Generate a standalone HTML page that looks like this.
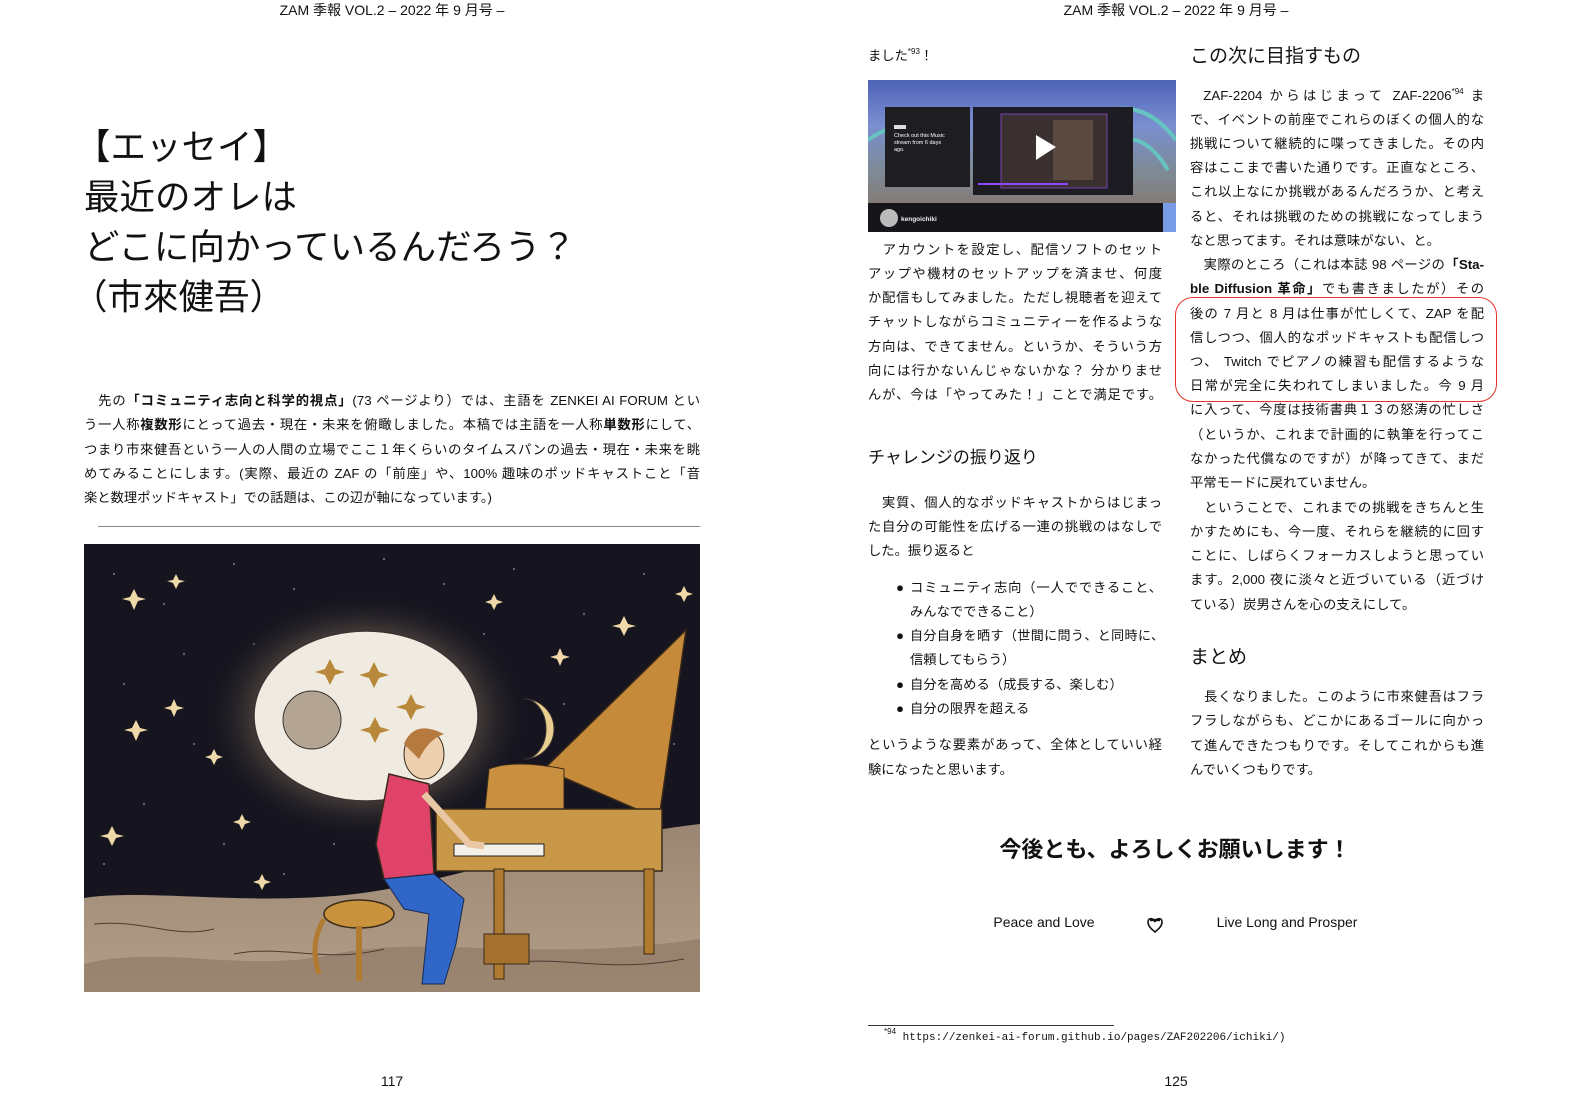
<!DOCTYPE html>
<html><head><meta charset="utf-8">
<style>
html,body{margin:0;padding:0;background:#fff;}
body{width:1584px;height:1118px;position:relative;overflow:hidden;font-family:"Liberation Sans","Noto Sans CJK JP",sans-serif;color:#111;}
.t{position:absolute;font-size:13.3px;line-height:20px;white-space:nowrap;}
.j{text-align:justify;text-align-last:justify;white-space:normal;height:20px;overflow:visible;}
.c{position:absolute;font-size:14px;line-height:20px;white-space:nowrap;transform:translateX(-50%);}
.h{position:absolute;white-space:nowrap;}
b{font-weight:bold;}
sup{font-size:8px;vertical-align:6px;line-height:0;}
</style></head><body>

<div class="c" style="left:392px;top:0px;">ZAM 季報 VOL.2 – 2022 年 9 月号 –</div>
<div class="c" style="left:1176px;top:0px;">ZAM 季報 VOL.2 – 2022 年 9 月号 –</div>

<div class="h" style="left:84px;top:122px;font-size:35.5px;line-height:50px;"><span style="margin-left:-9px">【エッセイ】</span><br>最近のオレは<br>どこに向かっているんだろう？<br><span style="margin-left:-12px">（市來健吾）</span></div>

<div class="t j" style="left:84px;width:616px;top:391px;">&emsp;先の<b>「コミュニティ志向と科学的視点」</b>(73 ページより）では、主語を ZENKEI AI FORUM とい</div>
<div class="t j" style="left:84px;width:616px;top:415px;">う一人称<b>複数形</b>にとって過去・現在・未来を俯瞰しました。本稿では主語を一人称<b>単数形</b>にして、</div>
<div class="t j" style="left:84px;width:616px;top:440px;">つまり市來健吾という一人の人間の立場でここ１年くらいのタイムスパンの過去・現在・未来を眺</div>
<div class="t j" style="left:84px;width:616px;top:464px;">めてみることにします。(実際、最近の ZAF の「前座」や、100% 趣味のポッドキャストこと「音</div>
<div class="t" style="left:84px;top:488px;">楽と数理ポッドキャスト」での話題は、この辺が軸になっています。)</div>
<div style="position:absolute;left:98px;top:526px;width:602px;height:1px;background:#888;"></div>

<svg style="position:absolute;left:84px;top:544px;" width="616" height="448" viewBox="0 0 616 448">
<defs>
<radialGradient id="glow" cx="0.5" cy="0.5" r="0.5"><stop offset="0.6" stop-color="#5a4e44"/><stop offset="1" stop-color="#14131d" stop-opacity="0"/></radialGradient>
<linearGradient id="gr" x1="0" y1="0" x2="0" y2="1"><stop offset="0" stop-color="#9b8673"/><stop offset="1" stop-color="#b39f88"/></linearGradient>
</defs>
<rect width="616" height="448" fill="#15141f"/>
<g fill="#d8d6e0" opacity="0.55">
<circle cx="30" cy="30" r="1"/><circle cx="80" cy="60" r="1"/><circle cx="150" cy="20" r="1"/><circle cx="210" cy="45" r="1"/><circle cx="300" cy="15" r="1"/><circle cx="360" cy="40" r="1"/><circle cx="430" cy="25" r="1"/><circle cx="500" cy="70" r="1"/><circle cx="560" cy="30" r="1"/><circle cx="40" cy="140" r="1"/><circle cx="110" cy="200" r="1"/><circle cx="60" cy="260" r="1"/><circle cx="140" cy="300" r="1"/><circle cx="200" cy="330" r="1"/><circle cx="250" cy="300" r="1"/><circle cx="20" cy="320" r="1"/><circle cx="480" cy="160" r="1"/><circle cx="590" cy="200" r="1"/><circle cx="540" cy="250" r="1"/><circle cx="170" cy="100" r="1"/><circle cx="100" cy="110" r="1"/><circle cx="400" cy="90" r="1"/>
</g>
<ellipse cx="282" cy="172" rx="165" ry="125" fill="url(#glow)"/>
<ellipse cx="282" cy="172" rx="112" ry="85" fill="#f0ebe0" stroke="#3a3230" stroke-width="1.5"/>
<circle cx="228" cy="176" r="29" fill="#b3a592" stroke="#3a3230"/>
<g fill="#b8893a"><polygon points="246,115 251,125 261,128 251,131 246,141 241,131 231,128 241,125"/><polygon points="290,118 295,128 305,131 295,134 290,144 285,134 275,131 285,128"/><polygon points="327,150 332,160 342,163 332,166 327,176 322,166 312,163 322,160"/><polygon points="291,173 296,183 306,186 296,189 291,199 286,189 276,186 286,183"/></g>
<g fill="#f0d9a8"><polygon points="50,45 54,53 62,55 54,57 50,66 46,57 38,55 46,53"/><polygon points="92,30 95,36 101,37 95,39 92,45 89,39 83,37 89,36"/><polygon points="90,155 93,162 100,164 93,166 90,173 87,166 80,164 87,162"/><polygon points="52,176 56,184 64,186 56,188 52,197 48,188 40,186 48,184"/><polygon points="130,205 133,211 139,213 133,215 130,221 127,215 121,213 127,211"/><polygon points="28,282 32,290 40,292 32,294 28,302 24,294 16,292 24,290"/><polygon points="158,270 161,276 167,278 161,280 158,286 155,280 149,278 155,276"/><polygon points="178,330 181,336 187,338 181,340 178,346 175,340 169,338 175,336"/><polygon points="540,72 544,80 552,82 544,84 540,92 536,84 528,82 536,80"/><polygon points="476,104 479,111 486,113 479,115 476,122 473,115 466,113 473,111"/><polygon points="600,42 603,48 609,50 603,52 600,58 597,52 591,50 597,48"/><polygon points="410,50 413,56 419,58 413,60 410,66 407,60 401,58 407,56"/></g>
<path d="M440,155 a28,28 0 0 1 0,60 a22,30 0 0 0 0,-60z" fill="#e8cf90" stroke="#3a3230"/>
<path d="M0,354 C60,345 150,360 250,352 C350,345 450,300 616,280 L616,448 L0,448z" fill="url(#gr)"/>
<path d="M0,420 C80,400 160,430 250,410 C350,390 450,420 616,395 L616,448 L0,448z" fill="#8a7563" opacity="0.6"/>
<path d="M10,380 C60,375 90,395 130,385 M150,410 C200,400 240,420 300,405 M420,420 C480,410 520,430 600,415" stroke="#4a3c32" fill="none"/>
<path d="M460,225 L602,86 L575,275z" fill="#c58a3a" stroke="#3a2a18" stroke-width="1.5"/>
<path d="M405,225 Q430,215 480,225 L480,270 L400,275z" fill="#c89040" stroke="#3a2a18"/>
<rect x="352" y="265" width="226" height="62" fill="#c89848" stroke="#3a2a18" stroke-width="1.5"/>
<rect x="370" y="300" width="90" height="12" fill="#f3f0e8" stroke="#222"/>
<rect x="410" y="325" width="10" height="110" fill="#b07a30" stroke="#3a2a18"/>
<rect x="560" y="325" width="10" height="85" fill="#b07a30" stroke="#3a2a18"/>
<rect x="400" y="390" width="45" height="30" fill="#a4722e" stroke="#3a2a18"/>
<ellipse cx="275" cy="370" rx="35" ry="14" fill="#c9923c" stroke="#3a2a18" stroke-width="1.5"/>
<rect x="272" y="382" width="6" height="55" fill="#b07a30"/>
<path d="M240,375 Q225,400 235,430" stroke="#b07a30" stroke-width="5" fill="none"/>
<path d="M305,230 L345,240 L350,330 L300,335 L292,300z" fill="#e0436a" stroke="#3a2a18" stroke-width="1.5"/>
<path d="M300,335 L350,330 L380,355 L372,400 L360,440 L338,440 L345,370 L320,365z" fill="#2f66c8" stroke="#1a2a50"/>
<path d="M340,250 L385,300 L400,302" stroke="#e9c7a5" stroke-width="7" fill="none"/>
<ellipse cx="340" cy="210" rx="20" ry="25" fill="#ecd0b0" stroke="#3a2a18"/>
<path d="M320,200 Q330,175 360,190 Q345,195 335,215z" fill="#b77a3e"/>
</svg>

<div class="t" style="left:868px;top:46px;">ました<sup>*93</sup>！</div>
<svg style="position:absolute;left:868px;top:80px;" width="308" height="152" viewBox="0 0 308 152">
<defs><linearGradient id="sk" x1="0" y1="0" x2="0" y2="1"><stop offset="0" stop-color="#4f63b8"/><stop offset="0.3" stop-color="#7a8fd0"/><stop offset="0.6" stop-color="#7d8a96"/><stop offset="1" stop-color="#8b6f5a"/></linearGradient></defs>
<rect width="308" height="152" fill="url(#sk)"/>
<path d="M0,60 Q40,30 90,70 M220,40 Q270,10 308,60 M230,70 Q270,40 300,90" stroke="#66c4c0" stroke-width="4" fill="none"/>
<rect x="17" y="27" width="85" height="80" fill="#1e1d22"/>
<rect x="26" y="45" width="12" height="4" fill="#ddd"/>
<text x="26" y="57" font-size="5.5" fill="#fff" font-family="Liberation Sans">Check out this Music</text>
<text x="26" y="64" font-size="5.5" fill="#fff" font-family="Liberation Sans">stream from 6 days</text>
<text x="26" y="71" font-size="5.5" fill="#fff" font-family="Liberation Sans">ago.</text>
<rect x="105" y="27" width="160" height="88" fill="#1c1c22"/>
<rect x="133" y="34" width="106" height="74" fill="#3a3030" stroke="#7a3fb0"/>
<rect x="185" y="40" width="40" height="60" fill="#5a4a40"/>
<polygon points="168,55 168,80 188,67" fill="#fff"/>
<rect x="110" y="103" width="90" height="2" fill="#9147ff"/>
<rect x="0" y="123" width="295" height="29" fill="#16151a"/>
<rect x="295" y="123" width="13" height="29" fill="#7a9be8"/>
<circle cx="21" cy="138" r="9" fill="#bbb"/>
<text x="33" y="141" font-size="6.5" fill="#eee" font-family="Liberation Sans" font-weight="bold">kengoichiki</text>
</svg>
<div class="t j" style="left:868px;width:294px;top:240px;">&emsp;アカウントを設定し、配信ソフトのセット</div>
<div class="t j" style="left:868px;width:294px;top:264px;">アップや機材のセットアップを済ませ、何度</div>
<div class="t j" style="left:868px;width:294px;top:288px;">か配信もしてみました。ただし視聴者を迎えて</div>
<div class="t j" style="left:868px;width:294px;top:312px;">チャットしながらコミュニティーを作るような</div>
<div class="t j" style="left:868px;width:294px;top:337px;">方向は、できてません。というか、そういう方</div>
<div class="t j" style="left:868px;width:294px;top:361px;">向には行かないんじゃないかな？ 分かりませ</div>
<div class="t j" style="left:868px;width:294px;top:385px;">んが、今は「やってみた！」ことで満足です。</div>

<div class="h" style="left:868px;top:446px;font-size:17px;line-height:24px;">チャレンジの振り返り</div>
<div class="t j" style="left:868px;width:294px;top:493px;">&emsp;実質、個人的なポッドキャストからはじまっ</div>
<div class="t j" style="left:868px;width:294px;top:517px;">た自分の可能性を広げる一連の挑戦のはなしで</div>
<div class="t" style="left:868px;top:541px;">した。振り返ると</div>
<div class="t" style="left:896px;top:578px;">●</div>
<div class="t j" style="left:910px;width:252px;top:578px;">コミュニティ志向（一人でできること、</div>
<div class="t" style="left:910px;top:602px;">みんなでできること）</div>
<div class="t" style="left:896px;top:626px;">●</div>
<div class="t j" style="left:910px;width:254px;top:626px;font-size:13px;">自分自身を晒す（世間に問う、と同時に、</div>
<div class="t" style="left:910px;top:650px;">信頼してもらう）</div>
<div class="t" style="left:896px;top:675px;">●</div>
<div class="t" style="left:910px;top:675px;">自分を高める（成長する、楽しむ）</div>
<div class="t" style="left:896px;top:699px;">●</div>
<div class="t" style="left:910px;top:699px;">自分の限界を超える</div>
<div class="t j" style="left:868px;width:294px;top:735px;">というような要素があって、全体としていい経</div>
<div class="t" style="left:868px;top:760px;">験になったと思います。</div>

<div class="h" style="left:1190px;top:44px;font-size:19px;line-height:26px;">この次に目指すもの</div>
<div class="t j" style="left:1190px;width:294px;top:86px;">&emsp;ZAF-2204 からはじまって ZAF-2206<sup>*94</sup> ま</div>
<div class="t j" style="left:1190px;width:294px;top:110px;">で、イベントの前座でこれらのぼくの個人的な</div>
<div class="t j" style="left:1190px;width:294px;top:134px;">挑戦について継続的に喋ってきました。その内</div>
<div class="t j" style="left:1190px;width:294px;top:158px;">容はここまで書いた通りです。正直なところ、</div>
<div class="t j" style="left:1190px;width:294px;top:182px;">これ以上なにか挑戦があるんだろうか、と考え</div>
<div class="t j" style="left:1190px;width:294px;top:207px;">ると、それは挑戦のための挑戦になってしまう</div>
<div class="t" style="left:1190px;top:231px;">なと思ってます。それは意味がない、と。</div>
<div class="t j" style="left:1190px;width:294px;top:255px;">&emsp;実際のところ（これは本誌 98 ページの<b>「Sta-</b></div>
<div class="t j" style="left:1190px;width:294px;top:279px;"><b>ble Diffusion 革命」</b>でも書きましたが）その</div>
<div class="t j" style="left:1190px;width:294px;top:304px;">後の 7 月と 8 月は仕事が忙しくて、ZAP を配</div>
<div class="t j" style="left:1190px;width:294px;top:328px;">信しつつ、個人的なポッドキャストも配信しつ</div>
<div class="t j" style="left:1190px;width:294px;top:352px;">つ、 Twitch でピアノの練習も配信するような</div>
<div class="t j" style="left:1190px;width:294px;top:376px;">日常が完全に失われてしまいました。今 9 月</div>
<div class="t j" style="left:1190px;width:294px;top:400px;">に入って、今度は技術書典１３の怒涛の忙しさ</div>
<div class="t j" style="left:1190px;width:294px;top:425px;">（というか、これまで計画的に執筆を行ってこ</div>
<div class="t j" style="left:1190px;width:294px;top:449px;">なかった代償なのですが）が降ってきて、まだ</div>
<div class="t" style="left:1190px;top:473px;">平常モードに戻れていません。</div>
<div class="t j" style="left:1190px;width:294px;top:498px;">&emsp;ということで、これまでの挑戦をきちんと生</div>
<div class="t j" style="left:1190px;width:294px;top:522px;">かすためにも、今一度、それらを継続的に回す</div>
<div class="t j" style="left:1190px;width:294px;top:546px;">ことに、しばらくフォーカスしようと思ってい</div>
<div class="t j" style="left:1190px;width:294px;top:570px;">ます。2,000 夜に淡々と近づいている（近づけ</div>
<div class="t" style="left:1190px;top:595px;">ている）炭男さんを心の支えにして。</div>
<div style="position:absolute;left:1175px;top:297px;width:320px;height:103px;border:1.5px solid #e8312a;border-radius:18px;"></div>

<div class="h" style="left:1190px;top:645px;font-size:19px;line-height:26px;">まとめ</div>
<div class="t j" style="left:1190px;width:294px;top:687px;">&emsp;長くなりました。このように市來健吾はフラ</div>
<div class="t j" style="left:1190px;width:294px;top:711px;">フラしながらも、どこかにあるゴールに向かっ</div>
<div class="t j" style="left:1190px;width:294px;top:736px;">て進んできたつもりです。そしてこれからも進</div>
<div class="t" style="left:1190px;top:760px;">んでいくつもりです。</div>

<div class="c" style="left:1175px;top:835px;font-size:22px;line-height:30px;font-weight:bold;">今後とも、よろしくお願いします！</div>
<div class="c" style="left:1044px;top:912px;">Peace and Love</div>
<svg style="position:absolute;left:1146px;top:916px;" width="18" height="18" viewBox="0 0 18 18"><path d="M2,6 C2,1 8,2 9,6 C10,2 16,1 16,6 C16,11 11,14 9,16 C7,14 2,11 2,6z" fill="none" stroke="#111" stroke-width="1.6"/><path d="M4,4 h10" stroke="#111" stroke-width="2.4"/></svg>
<div class="c" style="left:1287px;top:912px;">Live Long and Prosper</div>

<div style="position:absolute;left:868px;top:1025px;width:246px;height:1px;background:#333;"></div>
<div class="h" style="left:884px;top:1030px;font-size:11px;line-height:16px;font-family:'Liberation Mono',monospace;"><sup style="font-family:'Liberation Sans';">*94</sup> https://zenkei-ai-forum.github.io/pages/ZAF202206/ichiki/)</div>

<div class="c" style="left:392px;top:1071px;">117</div>
<div class="c" style="left:1176px;top:1071px;">125</div>
</body></html>
